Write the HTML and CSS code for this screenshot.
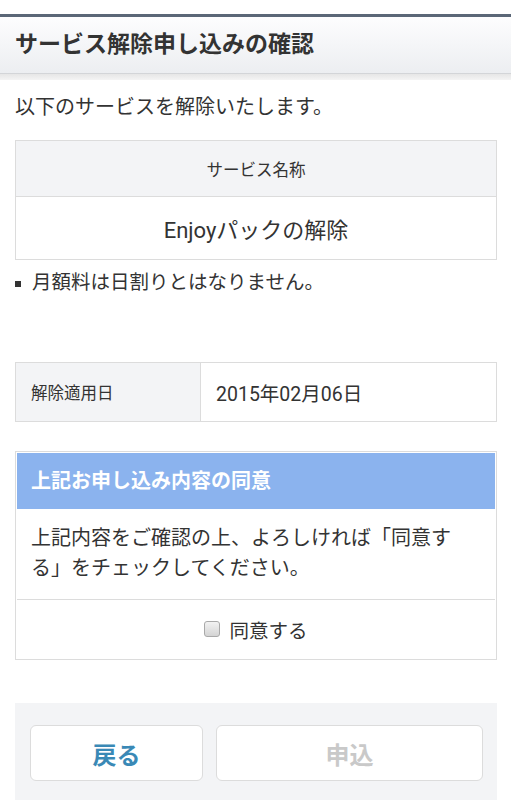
FILE: index.html
```html
<!DOCTYPE html>
<html lang="ja">
<head>
<meta charset="utf-8">
<title>サービス解除申し込みの確認</title>
<link rel="stylesheet" href="styles.css">
</head>
<body>
<div class="page">
  <header class="page-header">
    <h1 class="page-title">サービス解除申し込みの確認</h1>
  </header>
  <main class="content">
    <p class="intro">以下のサービスを解除いたします。</p>
    <table class="service-table">
      <tr><th class="service-head">サービス名称</th></tr>
      <tr><td class="service-name">Enjoyパックの解除</td></tr>
    </table>
    <ul class="notes">
      <li class="note">月額料は日割りとはなりません。</li>
    </ul>
    <table class="date-table">
      <tr>
        <th class="date-label">解除適用日</th>
        <td class="date-value">2015年02月06日</td>
      </tr>
    </table>
    <section class="agree-box">
      <h2 class="agree-title">上記お申し込み内容の同意</h2>
      <p class="agree-text">上記内容をご確認の上、よろしければ「同意する」をチェックしてください。</p>
      <label class="agree-check"><input type="checkbox" class="checkbox">同意する</label>
    </section>
    <div class="actions">
      <button class="btn btn-back">戻る</button>
      <button class="btn btn-submit" disabled>申込</button>
    </div>
  </main>
</div>
</body>
</html>
```
FILE: styles.css
```css
html, body {
  margin: 0;
  padding: 0;
  background: #fff;
}
body {
  font-family: Roboto, "Noto Sans CJK JP", sans-serif;
  color: #333;
  text-spacing-trim: space-all;
}
.page {
  padding-top: 14px;
}
.page-header {
  border-top: 3px solid #5b6777;
}
.page-header::after {
  content: "";
  display: block;
  height: 6px;
  background: linear-gradient(#e6e6e6, #f4f4f4);
}
.page-title {
  margin: 0;
  height: 56px;
  line-height: 56px;
  padding: 0 15px;
  font-size: 23px;
  font-weight: bold;
  color: #333;
  background: linear-gradient(#fdfdfe, #eceef1);
  border-bottom: 1px solid #d3d5d8;
}
.content {
  padding: 0 14px 0 15px;
}
.intro {
  margin: 13px 0 19px;
  font-size: 20px;
  line-height: 28px;
}
table {
  border-collapse: collapse;
  width: 100%;
}
.service-table th, .service-table td,
.date-table th, .date-table td {
  border: 1px solid #dcdcdc;
}
.service-head {
  height: 55px;
  padding: 0;
  background: #f3f4f6;
  font-size: 16.5px;
  font-weight: normal;
  text-align: center;
}
.service-name {
  height: 62px;
  padding: 0;
  font-size: 22px;
  text-align: center;
}
.notes {
  list-style: none;
  margin: 9px 0 65px;
  padding: 0;
}
.note {
  position: relative;
  padding-left: 17px;
  font-size: 19.5px;
  line-height: 28px;
}
.note::before {
  content: "";
  position: absolute;
  left: 0;
  top: 12px;
  width: 6px;
  height: 6px;
  background: #333;
}
.date-label {
  width: 154px;
  height: 58px;
  padding: 0 15px;
  background: #f3f4f6;
  font-size: 16.5px;
  font-weight: normal;
  text-align: left;
}
.date-value {
  padding: 0 15px;
  font-size: 19.5px;
}
.agree-box {
  margin-top: 29px;
  border: 1px solid #dcdcdc;
  padding: 1px;
}
.agree-title {
  margin: 0;
  height: 56px;
  line-height: 56px;
  padding: 0 14px;
  background: #8bb3ee;
  color: #fff;
  font-size: 20px;
  font-weight: bold;
}
.agree-text {
  margin: 0;
  padding: 14px 14px 16px;
  font-size: 20px;
  line-height: 30px;
  border-bottom: 1px solid #dcdcdc;
}
.agree-check {
  display: flex;
  align-items: center;
  justify-content: center;
  height: 58px;
  font-size: 19.5px;
}
.checkbox {
  appearance: none;
  -webkit-appearance: none;
  width: 16px;
  height: 16px;
  margin: 0 9px 0 0;
  border: 1px solid #a9a9a9;
  border-radius: 3px;
  background: linear-gradient(#f2f2f2, #d4d4d4);
}
.actions {
  margin-top: 43px;
  height: 97px;
  box-sizing: border-box;
  padding: 22px 14px 19px 15px;
  background: #f3f4f6;
  display: grid;
  grid-template-columns: 173px 1fr;
  gap: 13px;
}
.btn {
  height: 56px;
  border: 1px solid #dcdcdc;
  border-radius: 6px;
  background: #fff;
  font-family: Roboto, "Noto Sans CJK JP", sans-serif;
  font-size: 24px;
  font-weight: bold;
  padding: 0;
}
.btn-back {
  color: #3a89b6;
}
.btn-submit {
  color: #c9c9c9;
}
```
